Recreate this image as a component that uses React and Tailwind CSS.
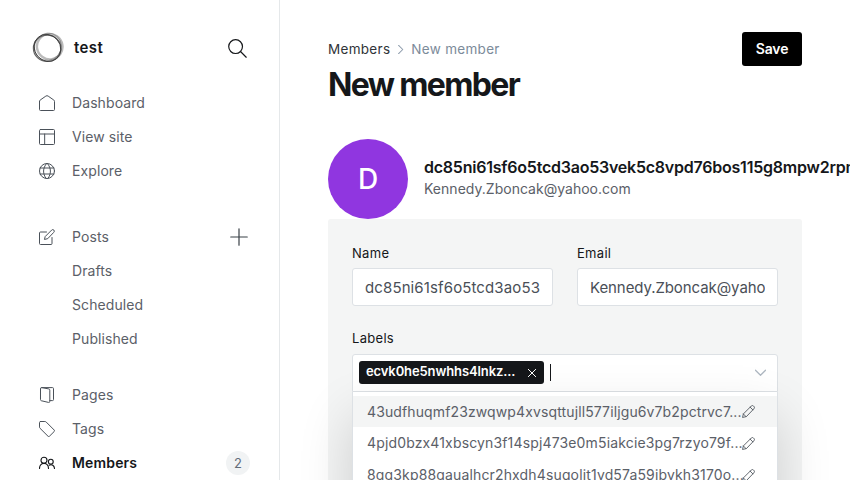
const stroke = {
  fill: 'none',
  stroke: 'currentColor',
  strokeLinecap: 'round',
  strokeLinejoin: 'round',
};

function Icon({ size = 16, width = 1.5, className = '', children }) {
  return (
    <svg viewBox="0 0 24 24" width={size} height={size} strokeWidth={width} {...stroke} className={`shrink-0 ${className}`}>
      {children}
    </svg>
  );
}

const icons = {
  home: <path d="M.75 9.6v12.15a1.5 1.5 0 0 0 1.5 1.5h19.5a1.5 1.5 0 0 0 1.5-1.5V9.6a2.5 2.5 0 0 0-1-2L13.8 1.7a3 3 0 0 0-3.6 0L1.75 7.6a2.5 2.5 0 0 0-1 2Z" />,
  layout: (
    <>
      <rect x=".75" y=".75" width="22.5" height="22.5" rx="1.5" />
      <path d="M.75 7.5h22.5M8.5 7.5v15.75" />
    </>
  ),
  globe: (
    <>
      <circle cx="12" cy="12" r="11.25" />
      <path d="M1.6 7.5h20.8M1.6 16.5h20.8M11.3.8C5.4 8 5.4 16 10.6 23.2M12.7.8C18.6 8 18.6 16 13.4 23.2" />
    </>
  ),
  compose: (
    <>
      <path d="M11.25 4.5h-9a1.5 1.5 0 0 0-1.5 1.5v15.75a1.5 1.5 0 0 0 1.5 1.5H18a1.5 1.5 0 0 0 1.5-1.5v-9" />
      <path d="m12.6 14.6-4.4 1.1 1.1-4.4L19 1.6a2.3 2.3 0 0 1 3.3 3.3Z" />
    </>
  ),
  pages: (
    <>
      <path d="M2.25 2.4A1.5 1.5 0 0 1 4 .9l10.7 2a1.8 1.8 0 0 1 1.5 1.8v16.8a1.6 1.6 0 0 1-2 1.6L3.4 20.6a1.5 1.5 0 0 1-1.15-1.4Z" />
      <path d="M4 .9h16.25a1.5 1.5 0 0 1 1.5 1.5v16.5a1.5 1.5 0 0 1-1.5 1.5h-4" />
    </>
  ),
  tag: <path d="M2.2.75h6.6a3 3 0 0 1 2.1.9l11.9 11.9a1.6 1.6 0 0 1 0 2.2l-7.1 7.1a1.6 1.6 0 0 1-2.2 0L1.6 11a3 3 0 0 1-.85-2.1V2.2A1.45 1.45 0 0 1 2.2.75Z" />,
  members: (
    <>
      <circle cx="7.5" cy="7.8" r="4.5" />
      <path d="M.75 20.3c0-10.3 13.5-10.3 13.5 0" />
      <circle cx="17.7" cy="10" r="3.6" />
      <path d="M15.2 15.4c4-2.3 8 .6 8 4.9" />
    </>
  ),
};

function NavItem({ icon, label, active, children }) {
  return (
    <li className={`flex h-[34px] items-center pl-[39px] pr-[30px] text-sm ${active ? 'font-semibold text-[#15171a]' : 'font-normal text-[#5b6068]'}`}>
      <span className="mr-[17px] flex w-4">
        {icon && <Icon width={active ? 1.7 : 1.5} className={active ? 'text-[#15171a]' : 'text-[#4a5159]'}>{icons[icon]}</Icon>}
      </span>
      <span className={active ? 'tracking-[0.15px]' : 'tracking-[0.09px]'}>{label}</span>
      {children}
    </li>
  );
}

function Logo() {
  return (
    <svg viewBox="0 0 32 32" width="32" height="32" fill="none" className="shrink-0">
      <ellipse cx="17.8" cy="14.8" rx="12.9" ry="12.6" stroke="#bbb" strokeWidth="2.4" transform="rotate(35 18 14.6)" />
      <ellipse cx="16.8" cy="15.1" rx="14" ry="13.2" stroke="#888" strokeWidth=".8" transform="rotate(-50 16 16)" />
      <ellipse cx="15.2" cy="16.3" rx="13.8" ry="13.2" stroke="#666" strokeWidth="1.2" />
      <ellipse cx="15.6" cy="16.4" rx="14.1" ry="12.8" stroke="#333" strokeWidth=".8" transform="rotate(50 16 16)" />
    </svg>
  );
}

function Sidebar() {
  return (
    <aside className="h-full w-[280px] shrink-0 border-r border-[#e5e8ea] pt-8">
      <div className="flex h-8 items-center pl-8 pr-8">
        <Logo />
        <span className="ml-[10px] flex-1 text-[15px] font-semibold tracking-[0.4px] text-[#15171a]">test</span>
        <Icon size={19} width={1.5} className="text-[#15171a]">
          <circle cx="9.6" cy="9.6" r="8.7" />
          <path d="m15.8 15.8 7.2 7.2" />
        </Icon>
      </div>
      <ul className="mt-[22px]">
        <NavItem icon="home" label="Dashboard" />
        <NavItem icon="layout" label="View site" />
        <NavItem icon="globe" label="Explore" />
      </ul>
      <ul className="mt-8">
        <NavItem icon="compose" label="Posts">
          <Icon size={18} width={1.6} className="ml-auto mr-px text-[#394047]">
            <path d="M12 1v22M1 12h22" />
          </Icon>
        </NavItem>
        <NavItem label="Drafts" />
        <NavItem label="Scheduled" />
        <NavItem label="Published" />
      </ul>
      <ul className="mt-[22px]">
        <NavItem icon="pages" label="Pages" />
        <NavItem icon="tag" label="Tags" />
        <NavItem icon="members" label="Members" active>
          <span className="-mr-px ml-auto flex h-6 w-6 items-center justify-center rounded-full bg-[#f1f3f4] text-[13px] font-normal text-[#626d79]">2</span>
        </NavItem>
      </ul>
    </aside>
  );
}

function Field({ label, value, spacing }) {
  return (
    <label className="block min-w-0 flex-1">
      <span className="block text-[13px] leading-5 font-normal tracking-[0.3px] text-[#15171a]">{label}</span>
      <span className="mt-[5px] flex h-[38px] items-center rounded-[3px] border border-[#dde1e5] bg-white px-3">
        <span className={`overflow-hidden pt-[2px] text-[15px] font-normal whitespace-nowrap text-[#4a4f57] ${spacing}`}>{value}</span>
      </span>
    </label>
  );
}

const options = [
  '43udfhuqmf23zwqwp4xvsqttujll577iljgu6v7b2pctrvc7...',
  '4pjd0bzx41xbscyn3f14spj473e0m5iakcie3pg7rzyo79f...',
  '8gg3kp88gaualhcr2hxdh4suqoljt1yd57a59jbykh3170o...',
];

function LabelSelect() {
  return (
    <div className="relative mt-[6px]">
      <div className="flex h-[38px] items-center rounded-t-[3px] border border-[#dde1e5] bg-white px-[6px]">
        <span className="mb-px flex h-[23px] w-[185px] items-center justify-between rounded-[3px] bg-[#15171a] pr-2 pb-px pl-[7px] text-[13px] font-semibold tracking-[-0.11px] text-white">
          ecvk0he5nwhhs4lnkz...
          <Icon size={8} width={3} className="mt-px">
            <path d="m1 1 22 22M23 1 1 23" />
          </Icon>
        </span>
        <span className="mb-px ml-[6px] h-[17px] w-px bg-[#15171a]" />
        <Icon size={11} width={2.8} className="mb-px mr-[5px] ml-auto text-[#aeb7c1]">
          <path d="m1 7 11 11L23 7" />
        </Icon>
      </div>
      <ul className="absolute top-[38px] right-0 left-0 h-[200px] border-x border-[#dde1e5] bg-white pt-1 shadow-[0_24px_50px_rgba(0,0,0,0.16)]">
        {options.map((option, i) => (
          <li key={option} className={`flex items-center pr-[21px] pl-[14px] text-sm font-normal text-[#5b6068] ${i === 0 ? 'h-[31px] bg-[#f4f5f5]' : 'h-8'}`}>
            <span className={`w-[375px] whitespace-nowrap ${i === 0 ? 'tracking-[0.12px]' : 'tracking-[0.15px]'}`}>{option}</span>
            <Icon size={13} width={1.6} className="text-[#4a5159]">
              <path d="M7.5 21.5 1 23l1.5-6.5L17.2 1.8a2.7 2.7 0 0 1 3.9 0l1.1 1.1a2.7 2.7 0 0 1 0 3.9ZM15 4l5 5M2.5 16.5l5 5" />
            </Icon>
          </li>
        ))}
      </ul>
    </div>
  );
}

export default function App() {
  return (
    <div className="flex h-[480px] w-[850px] overflow-hidden bg-white font-['Inter',sans-serif]">
      <Sidebar />
      <main className="w-[522px] shrink-0 pt-8 pl-12">
        <header className="flex h-[74px] items-start justify-between">
          <div>
            <nav className="mt-[7px] flex h-5 items-center text-[13.5px] leading-5 tracking-[0.3px]">
              <span className="font-normal text-[#303439]">Members</span>
              <Icon size={9} width={2.8} className="mx-[6px] text-[#8e9cac]">
                <path d="m7 1 11 11L7 23" />
              </Icon>
              <span className="text-[#7c8b9a]">New member</span>
            </nav>
            <h1 className="mt-[7px] text-[32px] leading-[38px] font-bold tracking-[-1.65px] text-[#15171a]">New member</h1>
          </div>
          <button className="h-[34px] w-[60px] rounded-[3px] bg-black text-sm font-semibold tracking-[-0.1px] text-white">Save</button>
        </header>
        <section className="mt-[33px] flex h-20 items-center">
          <div className="flex h-20 w-20 shrink-0 items-center justify-center rounded-full bg-[#9036e0] text-[28px] font-medium text-white">D</div>
          <div className="-mt-[3px] ml-4 whitespace-nowrap">
            <h3 className="text-base leading-[23px] font-semibold tracking-[-0.23px] text-[#15171a]">dc85ni61sf6o5tcd3ao53vek5c8vpd76bos115g8mpw2rpm</h3>
            <p className="text-sm leading-5 font-normal tracking-[0.02px] text-[#5b6068]">Kennedy.Zboncak@yahoo.com</p>
          </div>
        </section>
        <section className="h-[300px] rounded-[3px] bg-[#f4f5f5] px-6 pt-6">
          <div className="flex gap-6">
            <Field label="Name" value="dc85ni61sf6o5tcd3ao53vek5c8" spacing="tracking-[0.12px]" />
            <Field label="Email" value="Kennedy.Zboncak@yahoo.com" spacing="tracking-[-0.08px]" />
          </div>
          <div className="mt-[22px] text-[13px] leading-5 font-normal tracking-[0.3px] text-[#15171a]">Labels</div>
          <LabelSelect />
        </section>
      </main>
    </div>
  );
}
